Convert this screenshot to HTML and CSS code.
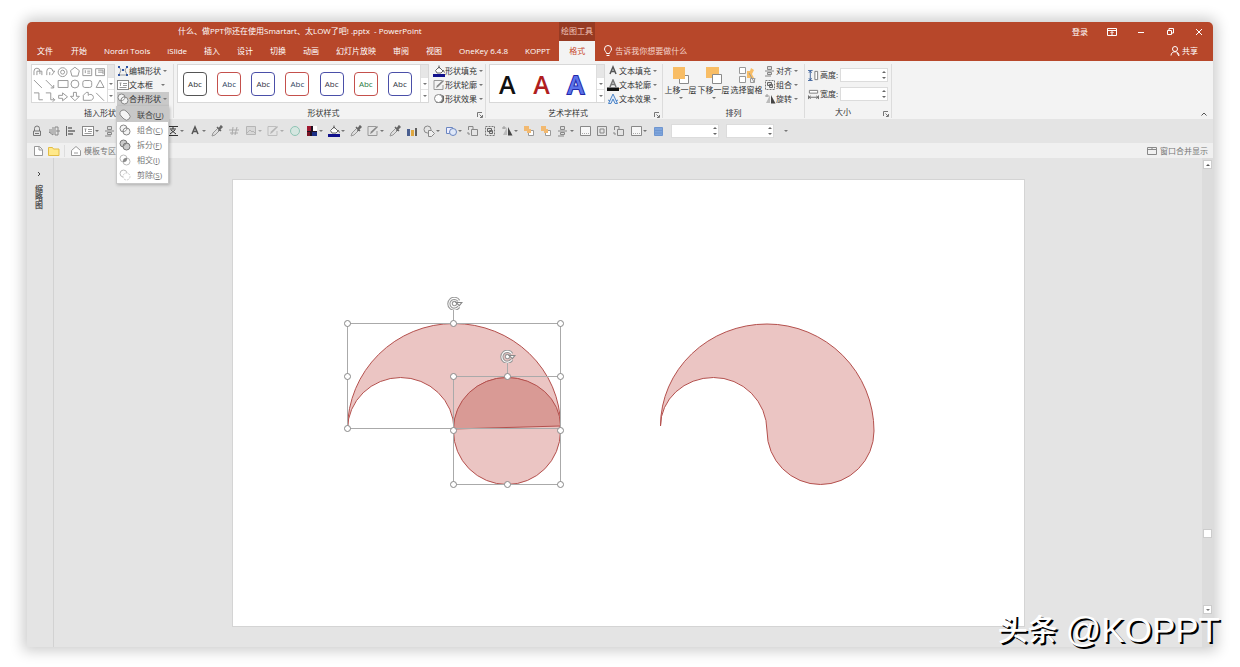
FILE: index.html
```html
<!DOCTYPE html>
<html lang="zh-CN">
<head>
<meta charset="utf-8">
<title>PowerPoint</title>
<link rel="stylesheet" href="styles.css">
</head>
<body>
<svg class="defs" aria-hidden="true">
  <defs>
    <symbol id="union" viewBox="0 0 12 12"><path d="M4 1a3.500 3.500 0 0 0-2 6l3 3a3.500 3.500 0 0 0 5-5L7 2a4 4 0 0 0-3-1z" fill="#f4f4f4" stroke="#888"/></symbol>
    <symbol id="combine" viewBox="0 0 12 12"><circle cx="4.500" cy="4.500" r="3.500" fill="#f4f4f4" stroke="#888"/><circle cx="7.500" cy="7.500" r="3.500" fill="#f4f4f4" stroke="#888"/><path d="M4 7.500A3.500 3.500 0 0 1 8 4 3.500 3.500 0 0 1 4 7.500z" fill="#fff" stroke="#888"/></symbol>
    <symbol id="fragment" viewBox="0 0 12 12"><circle cx="4.500" cy="4.500" r="3.500" fill="#ccc" stroke="#777"/><circle cx="7.500" cy="7.500" r="3.500" fill="#ccc" stroke="#777"/><path d="M4 7.500 7.500 4" stroke="#777"/></symbol>
    <symbol id="intersect" viewBox="0 0 12 12"><circle cx="4.500" cy="4.500" r="3.500" fill="none" stroke="#bbb"/><circle cx="7.500" cy="7.500" r="3.500" fill="none" stroke="#bbb"/><path d="M4 8a3.500 3.500 0 0 1 4-4 3.500 3.500 0 0 1-4 4z" fill="#888"/></symbol>
    <symbol id="subtract" viewBox="0 0 12 12"><path d="M8 4a3.500 3.500 0 1 0-4 4" fill="none" stroke="#bbb"/><circle cx="7.500" cy="7.500" r="3.500" fill="none" stroke="#ccc" stroke-dasharray="2 1"/></symbol>
    <symbol id="textbox" viewBox="0 0 12 12"><rect x=".5" y="1.500" width="11" height="9" fill="#fff" stroke="#888"/><path d="M2.500 4h2M3.500 4v3M6 4.500h4M6 6.500h4M2.500 8.500h7" stroke="#999"/></symbol>
    <symbol id="editpts" viewBox="0 0 12 12"><path d="M2 2l2 3-2 5M10 2 8 5l2 5M2 10h8" fill="none" stroke="#999"/><path d="M1 1h2v2H1zM9 1h2v2H9zM1 9h2v2H1zM9 9h2v2H9zM5 4h2v2H5z" fill="#2f55a4"/></symbol>
    <symbol id="bucket" viewBox="0 0 12 12"><path d="M2.500 5.500 6 2l4 4-2 2H4z" fill="#fff" stroke="#666"/><path d="M6 .5v3M10 5l1.500 2.500" stroke="#555"/><path d="M0 9h12v3H0z" fill="#11118c"/></symbol>
    <symbol id="outline" viewBox="0 0 12 12"><path d="M9 1.500H1v9h9V6" fill="none" stroke="#999"/><path d="M3 9l1-2.500L10 1l1 1-6 6z" fill="#888"/></symbol>
    <symbol id="effect" viewBox="0 0 12 12"><path d="M3 10h6l2-2V3L7 1z" fill="#666"/><circle cx="5.500" cy="5.500" r="4" fill="#fff" stroke="#888"/></symbol>
    <symbol id="dropper" viewBox="0 0 12 12"><path d="M1 11l1-3 5-5 2 2-5 5z" fill="#ddd" stroke="#999"/><path d="M6 2l4 4M8 4l2-3 1 1-3 3z" stroke="#666" stroke-width="1.500"/></symbol>
    <symbol id="fillA" viewBox="0 0 12 12"><path d="M3 9 6 2l3 7M4 6.500h4" fill="none" stroke="#555" stroke-width="1.500"/></symbol>
    <symbol id="lineA" viewBox="0 0 12 12"><path d="M3 8 6 1l3 7M4 5.500h4" fill="none" stroke="#777" stroke-width="1.500"/><path d="M0 8.500h12V12H0z" fill="#111"/></symbol>
    <symbol id="fxA" viewBox="0 0 12 12"><path d="M1.500 10.500 6 1l4.500 9.500H8L6 6l-2 4.500zM3 8l-2-1M9 8l2-1" fill="#dce8f8" stroke="#4f86c8"/></symbol>
    <symbol id="lock" viewBox="0 0 12 12"><path d="M3.500 6V3.500a2.500 2.500 0 0 1 5 0V6M2.500 6h7v4.500h-7zM4 8.500h4" fill="none" stroke="#777"/></symbol>
    <symbol id="mirror" viewBox="0 0 12 12"><path d="M5 2v8L1 7h3M1 5h3M7 2h3v8H7zM8 6h4" fill="none" stroke="#888"/></symbol>
    <symbol id="alignl" viewBox="0 0 12 12"><path d="M1.500 1v10" stroke="#666"/><path d="M3 2h4v2H3zM3 5h7v2H3zM3 8h5v2H3z" fill="#888"/></symbol>
    <symbol id="align" viewBox="0 0 12 12"><path d="M3.500 1.500h4v3h-4zM3.500 7.500h4v2h-4z" fill="#ddd" stroke="#888"/><path d="M1 6h9M1 11h6" stroke="#888"/></symbol>
    <symbol id="group" viewBox="0 0 12 12"><path d="M1.500 1.500h9v9h-9z" fill="none" stroke="#777" stroke-dasharray="2 1"/><path d="M3.500 3.500h4v3h-4zM5.500 5.500h3v3h-3z" fill="#ddd" stroke="#666"/></symbol>
    <symbol id="rotate" viewBox="0 0 12 12"><path d="M1 3h4M3 1v3" stroke="#999"/><path d="M6 2v8H2z" fill="#bbb"/><path d="M7 2l4.500 8.500H7z" fill="#444"/></symbol>
    <symbol id="front" viewBox="0 0 18 18"><path d="M7.500 9.500h9v8h-9z" fill="#fff" stroke="#8a8a8a"/><path d="M1 1h12v12H1z" fill="#f8bd65"/></symbol>
    <symbol id="back" viewBox="0 0 18 18"><path d="M1 1h13v11H1z" fill="#f8bd65"/><path d="M7.500 8.500h9v9h-9z" fill="#fff" stroke="#8a8a8a"/></symbol>
    <symbol id="pane" viewBox="0 0 18 18"><path d="M1.500 1.500h6v6h-6zM1.500 10.500h6v6h-6z" fill="#fff" stroke="#999"/><path d="M9 12V5h3l1-3 3 2-2 4 2 4h-4z" fill="#f8bd65"/><path d="M11 7l5 9 1-4M12.500 12.500h4v4h-4z" fill="none" stroke="#999"/></symbol>
    <symbol id="height" viewBox="0 0 12 12"><path d="M2.500 1v10M1 3l1.500-2L4 3M1 9l1.500 2L4 9M0 .5h5M0 11.500h5" fill="none" stroke="#3a5f9a"/><path d="M7.500 1.500h3v9h-3z" fill="#fff" stroke="#777"/></symbol>
    <symbol id="width" viewBox="0 0 12 12"><path d="M1.500 1.500h9v3h-9z" fill="#fff" stroke="#777"/><path d="M1 9h10M.5 7v4M11.500 7v4M3 7.500 1 9l2 1.500M9 7.500 11 9 9 10.500" fill="none" stroke="#666"/></symbol>
    <symbol id="pic" viewBox="0 0 12 12"><path d="M1.500 1.500h9v8h-9zM2 8l3-3 2 2 1-1 3 3" fill="#ccc" stroke="#888"/></symbol>
    <symbol id="hash" viewBox="0 0 12 12"><path d="M1 5h10M2 8h8M5 2 4 10M9 2 7 10" stroke="#aaa" fill="none"/></symbol>
    <symbol id="ring" viewBox="0 0 12 12"><circle cx="6" cy="6" r="4.500" fill="#d5e6e0" stroke="#8fc4b4"/></symbol>
    <symbol id="colors" viewBox="0 0 12 12"><path d="M1 1h10v10H1z" fill="#201020"/><path d="M1 1h4v5H1z" fill="#a01830"/><path d="M7 1h4v5H7z" fill="#fff"/><path d="M6 7h5v4H6z" fill="#1b2f86"/><path d="M1 7h3v4H1z" fill="#7a1525"/></symbol>
    <symbol id="bars" viewBox="0 0 12 12"><path d="M1 4h3v7H1z" fill="#4a5f90"/><path d="M5 5h3v6H5z" fill="#e0a840"/><path d="M9 3h2v8H9z" fill="#606060"/></symbol>
    <symbol id="shapes" viewBox="0 0 12 12"><circle cx="4.500" cy="4.500" r="3.500" fill="none" stroke="#888"/><path d="M5.500 5.500h3l3 3-3 3h-3z" fill="#eee" stroke="#888"/></symbol>
    <symbol id="shapesb" viewBox="0 0 12 12"><path d="M1.500 2.500h6v6h-6z" fill="#eef" stroke="#6a86c0"/><circle cx="8" cy="7" r="3.500" fill="#dfe8f8" stroke="#6a86c0"/></symbol>
    <symbol id="copy" viewBox="0 0 12 12"><path d="M1.500 5V1.500H6V4M4.500 4.500h6v6h-6zM1 7v2h2" fill="none" stroke="#888"/></symbol>
    <symbol id="layer" viewBox="0 0 12 12"><path d="M5.500 5.500h5v5h-5z" fill="#fff" stroke="#999"/><path d="M1 1h5v3h2v4H4V6H1z" fill="#f2b970"/></symbol>
    <symbol id="frame" viewBox="0 0 12 12"><path d="M1.500 1.500h10v9h-10z" fill="#f7f7f7" stroke="#888"/><path d="M3 8.500h7" stroke="#aaa" stroke-dasharray="1 1"/></symbol>
    <symbol id="crop" viewBox="0 0 12 12"><path d="M1.500 1.500h9v9h-9zM4 4h4v4H4z" fill="none" stroke="#888"/></symbol>
    <symbol id="bluebox" viewBox="0 0 12 12"><path d="M2.500 2.500h8v8h-8z" fill="#7fa5dc" stroke="#6f96d0"/><path d="M2 5.500h9M2 8h9" stroke="#6f96d0"/></symbol>
    <symbol id="launch" viewBox="0 0 6 6"><path d="M.5 5V.5H5M2.500 2.500 5 5M5.500 3v2.500H3" fill="none" stroke="#777"/></symbol>
    <symbol id="file" viewBox="0 0 12 12"><path d="M2.500 1.500h5l3 3v6h-8zM7 1.500V5h3" fill="#fff" stroke="#999"/></symbol>
    <symbol id="folder" viewBox="0 0 12 12"><path d="M.5 2.500h4l1 1.500h5.500v6.500H.5z" fill="#ffe98a" stroke="#e3bd45"/></symbol>
    <symbol id="home" viewBox="0 0 12 12"><path d="M1.500 10.500v-5L6 1.500l4.500 4v5zM4 8h4" fill="#fff" stroke="#999"/></symbol>
    <symbol id="spin" viewBox="0 0 14 12"><path d="M10.500 3.500A5 5 0 1 0 10.500 9" fill="none" stroke="#999" stroke-width="3"/><path d="M10.500 3.500A5 5 0 1 0 10.500 9" fill="none" stroke="#fff"/><circle cx="6.500" cy="6" r="2" fill="#fff" stroke="#999"/><path d="M8 5h5.500L11 8z" fill="#fff" stroke="#888"/></symbol>
  </defs>
</svg>

<div class="window">
  <header class="head">
    <div class="titlebar">
      <h1 class="title">什么、做PPT你还在使用Smartart、太LOW了吧! .pptx &nbsp;- PowerPoint</h1>
      <span class="context">绘图工具</span>
      <div class="sys">
        <button class="login">登录</button>
        <button aria-label="功能区显示选项"><svg viewBox="0 0 10 10"><path d="M.5 1.500h9v7h-9zM.5 3.500h9M5 8V5M3.500 6 5 4.500 6.500 6"/></svg></button>
        <button aria-label="最小化"><svg viewBox="0 0 10 10"><path d="M2 5.500h6"/></svg></button>
        <button aria-label="还原"><svg viewBox="0 0 10 10"><path d="M2.500 3.500h4v4h-4zM4 3V1.500h4.500V6H7"/></svg></button>
        <button aria-label="关闭"><svg viewBox="0 0 10 10"><path d="M2 2l6 6M8 2 2 8"/></svg></button>
      </div>
    </div>
    <nav class="tabs">
      <button class="first">文件</button><button>开始</button><button>Nordri Tools</button><button>iSlide</button><button>插入</button><button>设计</button><button>切换</button><button>动画</button><button>幻灯片放映</button><button>审阅</button><button>视图</button><button>OneKey 6.4.8</button><button>KOPPT</button><button class="active">格式</button>
      <button class="tell"><svg viewBox="0 0 10 12"><path d="M3.500 8.500C3.500 7 1.500 6 1.500 4a3.500 3.500 0 0 1 7 0c0 2-2 3-2 4.500zM3.500 10.500h3"/></svg>告诉我你想要做什么</button>
      <button class="share"><svg viewBox="0 0 10 12"><circle cx="5" cy="4" r="2.500"/><path d="M1 10.500c0-5 8-5 8 0M7 8l2 3"/></svg>共享</button>
    </nav>
  </header>

  <section class="ribbon">
    <div class="group g-insert">
      <div class="body">
        <div class="gallery shapes">
          <svg class="shapegrid" viewBox="0 0 76 38" fill="none" stroke="#999">
            <path d="M2 10V6a3 3 0 0 1 6 0v3M5 10V6h5v4M15 10V6a3 3 0 0 1 6 0h2l-3 4M18 10V7"/><circle cx="31" cy="7" r="4.500"/><circle cx="31" cy="7" r="2"/><path d="M43.500 2 48 5.500 46.500 11h-6L39 5.500zM51.500 3.500h9v7h-9zM54 5v3M56 6h3M56 8h3M64.500 3.500h9v7h-9zM67 5h5M67 7h5M72 5v4"/>
            <path d="M2 15l8 8M14 15l8 8v-3M22 23h-3M26.500 15.500h10v7h-10z"/><circle cx="43.500" cy="19" r="4"/><rect x="51.500" y="15.500" width="9" height="7" rx="2"/><path d="M69 15l4 7.500h-8z"/>
            <path d="M2 28h5v7h4M14 28h5v7h4M21 33l2 2-2 2M27 30.500h4V28l5 4-5 4v-2.500h-4zM42 27.500h3v4h3l-4.500 4.500-4.500-4.500h3zM52 35.500v-5l3-3h2v3a3 3 0 1 1 2 5zM65 28l8 8"/>
          </svg>
          <div class="scroll"><i></i><i class="dn"></i><i class="dn"></i></div>
        </div>
        <div class="col">
          <button><svg><use href="#editpts"/></svg>编辑形状<b></b></button>
          <button><svg><use href="#textbox"/></svg>文本框 <b class="far"></b></button>
          <div class="merge">
            <button class="pressed"><svg><use href="#combine"/></svg>合并形状<b></b></button>
            <div class="menu">
              <button class="hot"><svg><use href="#union"/></svg><span>联合(<u>U</u>)</span></button>
              <button><svg><use href="#combine"/></svg><span>组合(<u>C</u>)</span></button>
              <button><svg><use href="#fragment"/></svg><span>拆分(<u>F</u>)</span></button>
              <button><svg><use href="#intersect"/></svg><span>相交(<u>I</u>)</span></button>
              <button><svg><use href="#subtract"/></svg><span>剪除(<u>S</u>)</span></button>
            </div>
          </div>
        </div>
      </div>
      <div class="label">插入形状</div>
    </div>

    <div class="group g-style">
      <div class="body">
        <div class="gallery">
          <div class="chips">
            <button class="chip k">Abc</button><button class="chip r">Abc</button><button class="chip b">Abc</button><button class="chip r">Abc</button><button class="chip b">Abc</button><button class="chip r g">Abc</button><button class="chip b">Abc</button>
          </div>
          <div class="scroll"><i></i><i class="dn"></i><i class="dn"></i></div>
        </div>
        <div class="col">
          <button><svg><use href="#bucket"/></svg>形状填充<b></b></button>
          <button><svg><use href="#outline"/></svg>形状轮廓<b></b></button>
          <button><svg><use href="#effect"/></svg>形状效果<b></b></button>
        </div>
      </div>
      <div class="label">形状样式<svg class="launch"><use href="#launch"/></svg></div>
    </div>

    <div class="group g-art">
      <div class="body">
        <div class="gallery">
          <div class="arts">
            <button class="art">A</button><button class="art red">A</button><button class="art blue">A</button>
          </div>
          <div class="scroll"><i></i><i class="dn"></i><i class="dn"></i></div>
        </div>
        <div class="col">
          <button><svg><use href="#fillA"/></svg>文本填充<b></b></button>
          <button><svg><use href="#lineA"/></svg>文本轮廓<b></b></button>
          <button><svg><use href="#fxA"/></svg>文本效果<b></b></button>
        </div>
      </div>
      <div class="label">艺术字样式<svg class="launch"><use href="#launch"/></svg></div>
    </div>

    <div class="group g-arrange">
      <div class="body">
        <button class="big"><svg><use href="#front"/></svg>上移一层<b></b></button>
        <button class="big"><svg><use href="#back"/></svg>下移一层<b></b></button>
        <button class="big"><svg><use href="#pane"/></svg>选择窗格</button>
        <div class="col">
          <button><svg><use href="#align"/></svg>对齐<b></b></button>
          <button><svg><use href="#group"/></svg>组合<b></b></button>
          <button><svg><use href="#rotate"/></svg>旋转<b></b></button>
        </div>
      </div>
      <div class="label">排列</div>
    </div>

    <div class="group g-size">
      <div class="body sizes">
        <label><svg><use href="#height"/></svg>高度:<span class="num"><input type="text"><em></em></span></label>
        <label><svg><use href="#width"/></svg>宽度:<span class="num"><input type="text"><em></em></span></label>
      </div>
      <div class="label">大小<svg class="launch"><use href="#launch"/></svg></div>
    </div>
    <button class="collapse" aria-label="折叠功能区"><svg viewBox="0 0 8 6"><path d="M1.500 4.500 4 2l2.500 2.500"/></svg></button>
  </section>

  <div class="qat">
    <button><svg><use href="#lock"/></svg></button><button><svg><use href="#mirror"/></svg></button><button><svg><use href="#alignl"/></svg></button><button><svg><use href="#textbox"/></svg><b></b></button><button class="under"><svg><use href="#align"/></svg></button>
    <button><svg viewBox="0 0 12 12"><path d="M1 1.500h10M1 10.500h10M3 4h6M6 2v2M3 9l5-4M4 5l5 4" fill="none" stroke="#333"/></svg><b></b></button><button><svg><use href="#fillA"/></svg><b></b></button><button><svg><use href="#dropper"/></svg></button><button><svg><use href="#hash"/></svg></button><button class="dim"><svg><use href="#pic"/></svg><b></b></button><button class="dim"><svg><use href="#outline"/></svg><b></b></button><button><svg><use href="#ring"/></svg></button><button><svg><use href="#colors"/></svg><b></b></button><button><svg><use href="#bucket"/></svg><b></b></button><button><svg><use href="#dropper"/></svg></button><button><svg><use href="#outline"/></svg><b></b></button><button><svg><use href="#dropper"/></svg></button><button><svg><use href="#bars"/></svg></button><button><svg><use href="#shapes"/></svg><b></b></button><button><svg><use href="#shapesb"/></svg><b></b></button><button><svg><use href="#copy"/></svg></button><button><svg><use href="#group"/></svg></button><button><svg><use href="#rotate"/></svg><b></b></button><button><svg><use href="#layer"/></svg></button><button><svg><use href="#layer"/></svg></button><button><svg><use href="#align"/></svg><b></b></button><button><svg><use href="#frame"/></svg></button><button><svg><use href="#crop"/></svg></button><button><svg><use href="#copy"/></svg></button><button><svg><use href="#frame"/></svg><b></b></button><button><svg><use href="#bluebox"/></svg></button>
    <span class="num"><input type="text" aria-label="水平位置"><em></em></span>
    <span class="num"><input type="text" aria-label="垂直位置"><em></em></span>
    <button class="more" aria-label="更多"><b></b></button>
  </div>

  <div class="docs">
    <button aria-label="新建"><svg><use href="#file"/></svg></button>
    <button aria-label="打开"><svg><use href="#folder"/></svg></button>
    <button class="tpl"><svg><use href="#home"/></svg>模板专区</button>
    <button class="mergewin"><svg viewBox="0 0 12 12"><path d="M1.500 2.500h9v7h-9zM1.500 4.500h9M6 2v2" fill="none" stroke="#888"/></svg>窗口合并显示</button>
  </div>

  <main class="work">
    <aside class="thumbs"><button aria-label="展开"><svg viewBox="0 0 6 8"><path d="M2 2l2 2-2 2" fill="none" stroke="#444"/></svg></button><span>缩略图</span></aside>
    <div class="stage">
      <svg class="slide" viewBox="0 0 791 446">
        <g class="shape">
          <path d="M114.500 249A106.500 105.500 0 0 1 221 143.500A106.500 102.500 0 0 1 327.500 246L221 249A53.500 52 0 0 0 167.500 197.500A53.500 52 0 0 0 114.500 249z"/>
          <circle cx="274" cy="251" r="53.500"/>
          <path class="overlap" d="M220.500 249A53.500 51.500 0 0 1 274 197.500A53.500 48.500 0 0 1 327.500 246z"/>
          <path d="M427.500 246A106.500 102 0 0 1 534 144A107 107 0 0 1 641 251A53.500 53.500 0 0 1 534 251A53.500 53.500 0 0 0 480.500 197.500A53 48.500 0 0 0 427.500 246z"/>
        </g>
        <g class="box">
          <path d="M114.500 143.500h213v105h-213zM220.500 196.500h107v108h-107zM220.500 143v-14M274.500 196v-13"/>
        </g>
        <g class="handle">
          <circle cx="114.500" cy="143.500" r="3"/><circle cx="220.500" cy="143.500" r="3"/><circle cx="327.500" cy="143.500" r="3"/>
          <circle cx="114.500" cy="196.500" r="3"/><circle cx="114.500" cy="248.500" r="3"/><circle cx="220.500" cy="196.500" r="3"/>
          <circle cx="274.500" cy="196.500" r="3"/><circle cx="327.500" cy="196.500" r="3"/><circle cx="220.500" cy="250.500" r="3"/>
          <circle cx="327.500" cy="250.500" r="3"/><circle cx="220.500" cy="304.500" r="3"/><circle cx="274.500" cy="304.500" r="3"/><circle cx="327.500" cy="304.500" r="3"/>
        </g>
        <use href="#spin" x="214" y="117" width="16" height="13"/>
        <use href="#spin" x="267" y="170" width="16" height="13"/>
      </svg>
    </div>
    <div class="vscroll"><button aria-label="向上"><i class="up"></i></button><span class="thumb"></span><button aria-label="向下"><i class="dn"></i></button></div>
  </main>
</div>
<div class="mark"><strong>头条</strong> <span>@KOPPT</span></div>
</body>
</html>
```

FILE: styles.css
```css
* { box-sizing: border-box; }
body {
  margin: 0;
  min-height: 100vh;
  padding: 22px 27px 20px;
  display: flex;
  background: #fff;
  font: 8px/12px "Open Sans", "Noto Sans CJK SC", sans-serif;
  color: #333;
}
.defs { position: absolute; width: 0; height: 0; }
button { font: inherit; color: inherit; background: none; border: 0; padding: 0; margin: 0; display: flex; align-items: center; white-space: nowrap; }
svg { display: block; flex: none; }
b { border: 2px solid transparent; border-top-color: #777; border-bottom: 0; }
.window {
  flex: 1;
  display: flex;
  flex-direction: column;
  background: #e4e4e4;
  border-radius: 5px 5px 0 0;
  box-shadow: 0 0 14px 4px rgba(0, 0, 0, .2);
}

/* title bar and tabs */
.head { background: #b7472a; color: #fff; border-radius: 5px 5px 0 0; }
.head svg { fill: none; stroke: #fff; }
.titlebar { display: grid; grid-template-columns: 532px 36px 1fr; height: 19px; align-items: stretch; }
.title { margin: 0; padding: 3px 0 0 151px; font-size: 8px; line-height: 12px; font-weight: 400; white-space: nowrap; }
.context { background: #973a22; color: #f0c4b8; text-align: center; padding-top: 3px; white-space: nowrap; }
.sys { display: flex; justify-content: flex-end; align-items: center; gap: 19px; padding-right: 9px; }
.sys svg { width: 10px; height: 10px; }
.tabs { display: flex; height: 20px; align-items: stretch; }
.tabs button { padding: 0 9px 0 8px; }
.tabs .first { padding: 0 10px; }
.tabs .active { background: #f3f3f3; color: #c8492b; padding: 0 10px; }
.tabs .tell { gap: 2px; color: #f4d5cc; }
.tabs .share { margin-left: auto; gap: 2px; padding-right: 15px; }
.tabs svg { width: 10px; height: 12px; }

/* ribbon */
.ribbon { display: flex; background: #f3f3f3; height: 58px; padding-top: 3px; }
.group { display: flex; flex-direction: column; border-right: 1px solid #dcdcdc; margin-bottom: 1px; }
.body { display: flex; height: 42px; padding-left: 3px; }
.label { position: relative; flex: 1; text-align: center; line-height: 13px; }
.launch { position: absolute; right: 2px; bottom: 1px; width: 6px; height: 6px; }
.g-insert { width: 147px; }
.g-insert .body { padding-left: 4px; }
.g-style { width: 312px; }
.g-art { width: 177px; }
.g-arrange { width: 142px; }
.g-size { width: 87px; }
.g-style .label { padding-right: 12px; }
.g-art .label { padding-right: 12px; }
.g-size .label { padding-right: 10px; }
.gallery { display: flex; background: #fff; border: 1px solid #d8d8d8; height: 39px; }
.shapes { width: 84px; }
.shapegrid { width: 75px; height: 38px; }
.scroll { display: flex; flex-direction: column; width: 8px; border-left: 1px solid #ddd; }
.scroll i { flex: 1; background: #e6e6e6; }
.scroll .dn { background: #fff; border-top: 1px solid #e4e4e4; display: flex; align-items: center; justify-content: center; }
.dn::after { content: ""; border: 2px solid transparent; border-top-color: #777; border-bottom: 0; }
.col { display: flex; flex-direction: column; padding-left: 4px; }
.col button { height: 14px; }
.col svg { width: 12px; height: 12px; }
.col b { margin-left: 2px; }
.col .far { margin-left: 8px; }
.g-insert .col { padding-left: 2px; }
.g-art .col { padding-left: 2px; }
.chips { display: flex; justify-content: space-between; align-items: center; width: 242px; padding: 0 8px 0 5px; }
.chip { width: 24px; height: 24px; justify-content: center; border: 1px solid #555; border-radius: 4px; }
.chip.r { border-color: #c4504c; color: #33475f; }
.chip.b { border-color: #4a4fa8; color: #334; }
.chip.g { color: #2c7a3e; }
.arts { display: flex; justify-content: space-around; align-items: center; width: 106px; padding-right: 3px; }
.art { font: 600 25px/30px "Open Sans", sans-serif; color: #111; }
.art.red { color: #b01e1e; }
.art.blue { color: #5a72e8; -webkit-text-stroke: 2px #2228a8; paint-order: stroke fill; }
.merge { position: relative; }
.col .pressed { background: #c9c9c9; width: 52px; }
.menu {
  position: absolute;
  z-index: 2;
  top: 14px;
  left: -1px;
  width: 53px;
  padding-bottom: 1px;
  background: #fff;
  border: 1px solid #c8c8c8;
  box-shadow: 1px 1px 3px rgba(0, 0, 0, .25);
}
.menu button { width: 100%; height: 15px; padding-left: 2px; gap: 6px; color: #777; }
.menu .hot { background: #c8c8c8; color: #444; }
.g-arrange .body { padding-left: 1px; }
.big { flex-direction: column; width: 33px; line-height: 12px; padding-top: 2px; }
.big svg { width: 18px; height: 18px; }
.big b { margin-top: 1px; }
.g-arrange .col { padding-left: 1px; }
.sizes { flex-direction: column; padding: 4px 0 0 3px; gap: 5px; }
.sizes label { display: flex; align-items: center; gap: 1px; height: 14px; }
.sizes svg { width: 11px; height: 11px; }
.num { display: flex; width: 48px; height: 14px; background: #fff; border: 1px solid #dcdcdc; align-items: center; }
.num input { flex: 1; min-width: 0; border: 0; padding: 0; background: none; font: inherit; height: 12px; }
.sizes .num { margin-left: 1px; }
.num em { width: 4px; height: 8px; margin-right: 1px; display: flex; flex-direction: column; justify-content: space-between; }
.num em::before { content: ""; border: 2px solid transparent; border-bottom-color: #666; border-top: 0; }
.num em::after { content: ""; border: 2px solid transparent; border-top-color: #666; border-bottom: 0; }
.collapse { margin-left: auto; align-self: flex-end; margin-right: 5px; margin-bottom: 2px; }
.collapse svg { width: 8px; height: 6px; fill: none; stroke: #555; }

/* quick access bar */
.qat { display: flex; align-items: center; gap: 5px; height: 24px; padding: 0 4px; }
.qat svg { width: 12px; height: 12px; }
.qat button { gap: 1px; }
.qat .under { margin-right: 46px; }
.qat .dim { opacity: .5; }
.qat .num { margin-left: 2px; }
.qat .more { margin-left: 5px; }

/* document tabs */
.docs { display: flex; align-items: center; height: 15px; background: #f0f0f0; padding: 0 5px; color: #777; }
.docs svg { width: 12px; height: 12px; }
.docs button { gap: 2px; margin-right: 4px; }
.docs .tpl { border-left: 1px solid #ddd; padding-left: 5px; }
.docs .mergewin { margin: 0 0 0 auto; }

/* workspace */
.work { flex: 1; display: flex; }
.thumbs { width: 27px; padding: 12px 3px 0 0; border-right: 1px solid #d2d2d2; display: flex; flex-direction: column; align-items: center; gap: 7px; }
.thumbs button svg { width: 6px; height: 8px; }
.thumbs span { writing-mode: vertical-rl; font-weight: 700; color: #555; }
.stage { flex: 1; padding: 22px 178px 21px 179px; }
.slide { width: 100%; background: #fff; outline: 1px solid #d4d4d4; }
.shape { fill: #ebc5c3; stroke: #b4504d; stroke-width: 1; }
.overlap { fill: #d99a95; }
.box { fill: none; stroke: #aaa; }
.handle { fill: #fff; stroke: #888; }
.vscroll { width: 11px; background: #dcdcdc; display: flex; flex-direction: column; align-items: center; padding: 2px 0 33px; }
.vscroll button, .thumb { width: 9px; height: 9px; background: #fff; border: 1px solid #ccc; justify-content: center; }
.thumb { margin: auto 0 67px; }
.up { border: 2px solid transparent; border-bottom-color: #555; border-top: 0; }
.vscroll .dn { display: flex; }

.mark {
  position: absolute;
  right: 20px;
  bottom: 17px;
  display: flex;
  gap: 8px;
  font: 35px/40px "Liberation Sans", "Noto Sans CJK SC", sans-serif;
  color: #fff;
  text-shadow: 2px 2px 0 #000;
}
.mark strong { font-size: 30px; font-weight: 500; }
```
